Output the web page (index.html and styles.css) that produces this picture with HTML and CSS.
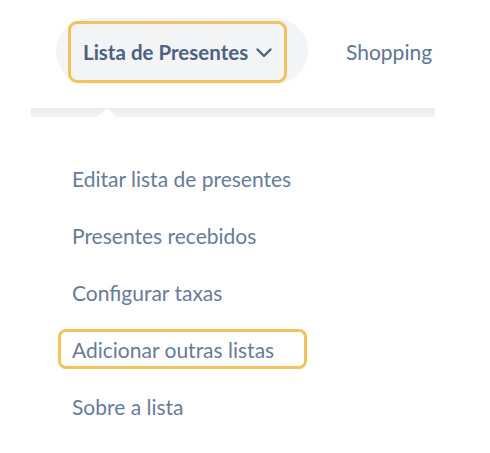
FILE: index.html
```html
<!DOCTYPE html>
<html lang="pt">
<head>
<meta charset="utf-8">
<link rel="stylesheet" href="styles.css">
</head>
<body>
<nav class="nav">
  <div class="pill">
    <button class="trigger">
      <span>Lista de Presentes</span>
      <svg class="chev" width="16" height="10" viewBox="0 0 16 10"><path d="M1.5 1.5 L8 8 L14.5 1.5" fill="none" stroke="#4d6180" stroke-width="2.4" stroke-linecap="round" stroke-linejoin="round"/></svg>
    </button>
  </div>
  <a class="navlink">Shopping</a>
</nav>
<div class="strip"><span class="caret"></span></div>
<ul class="menu">
  <li class="item">Editar lista de presentes</li>
  <li class="item">Presentes recebidos</li>
  <li class="item">Configurar taxas</li>
  <li class="item focus">Adicionar outras listas</li>
  <li class="item">Sobre a lista</li>
</ul>
</body>
</html>
```
FILE: styles.css
```css
html, body {
  margin: 0;
  padding: 0;
  background: #ffffff;
  font-family: Lato, "Noto Sans", sans-serif;
}
.nav {
  display: flex;
  align-items: center;
  padding: 18px 0 0 56px;
}
.pill {
  background: #f3f4f6;
  border-radius: 33px;
  padding: 3px 21px 1px 12px;
  display: flex;
}
.trigger {
  display: flex;
  align-items: center;
  gap: 8px;
  height: 62px;
  box-sizing: border-box;
  width: 219px;
  border: 3px solid #f2c25c;
  border-radius: 9px;
  background: #f3f4f6;
  padding: 0 0 0 12px;
  font-family: Lato, sans-serif;
  font-weight: 700;
  font-size: 20.5px;
  color: #4d6180;
  white-space: nowrap;
}
.chev {
  flex-shrink: 0;
  margin-top: 1px;
}
.navlink {
  margin-left: 38px;
  font-size: 21px;
  color: #5f7592;
}
.strip {
  position: relative;
  margin: 24px 0 0 31px;
  width: 404px;
  height: 9px;
  background: linear-gradient(#ebebeb, #f5f5f5);
}
.caret {
  position: absolute;
  left: 66px;
  top: 0;
  width: 0;
  height: 0;
  border-left: 10px solid transparent;
  border-right: 10px solid transparent;
  border-bottom: 9px solid #ffffff;
}
.menu {
  list-style: none;
  margin: 41px 0 0 58px;
  padding: 0;
  display: flex;
  flex-direction: column;
  gap: 17px;
}
.item {
  box-sizing: border-box;
  height: 40px;
  display: flex;
  align-items: center;
  padding-left: 14px;
  font-size: 21px;
  color: #667c98;
}
.focus {
  width: 249px;
  border: 3px solid #f2c25c;
  border-radius: 8px;
  padding-left: 11px;
}
```
